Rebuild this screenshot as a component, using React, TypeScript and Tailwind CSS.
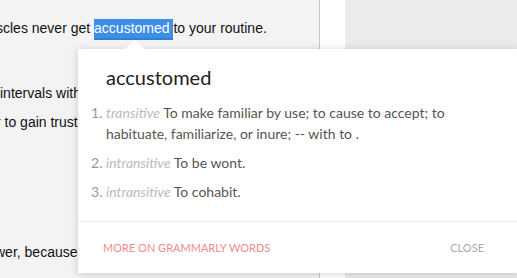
export default function App() {
  const defs = [
    {
      kind: 'transitive',
      text: 'To make familiar by use; to cause to accept; to habituate, familiarize, or inure; -- with to .',
    },
    { kind: 'intransitive', text: 'To be wont.' },
    { kind: 'intransitive', text: 'To cohabit.' },
  ]

  return (
    <div className="relative flex h-[278px] w-[517px] overflow-hidden bg-[#ebebeb]">
      {/* article column */}
      <div className="w-[320px] shrink-0 overflow-hidden border-r border-[#c9c9c9] bg-[#f3f3f3] font-['Liberation_Sans',Arial,sans-serif] text-[14px] leading-[29px] text-[#111]">
        <p className="-ml-[4px] mt-[14px] whitespace-nowrap">
          scles never get{' '}
          <span className="border-b-2 border-[#2f7fd8] bg-[#3d8fe6] pb-[2px] pt-[1px] text-white">
            accustomed{' '}
          </span>
          to your routine.
        </p>
        <p className="mt-[36px] whitespace-nowrap">intervals with your trainer</p>
        <p className="-ml-[4px] whitespace-nowrap">r to gain trust and build form</p>
        <p className="mt-[101px] -ml-[5px] whitespace-nowrap">wer, because the body adapts</p>
      </div>
      <div className="w-[25px] shrink-0 bg-white" />
      <div className="flex-1 bg-[#ebebeb]" />

      {/* definition popover */}
      <div className="absolute left-[78px] top-[49px] w-[440px] bg-white font-['Lato',sans-serif] shadow-[0_1px_8px_rgba(0,0,0,0.18)]">
        <div className="absolute -top-[9px] left-[47px] h-0 w-0 border-x-[10px] border-b-[9px] border-x-transparent border-b-white" />
        <div className="px-[28px] pb-[11px] pt-[14px]">
          <h2 className="text-[20px] leading-[28px] text-[#222]">accustomed</h2>
          <ol className="mt-[11px]">
            {defs.map((d, i) => (
              <li key={i} className="relative mb-[8px] text-[14px] leading-[21px] text-[#555]">
                <span className="absolute -left-[15px] text-[#999]">{i + 1}.</span>
                <span className="italic text-[#bbb]">{d.kind}</span> {d.text}
              </li>
            ))}
          </ol>
        </div>
        <div className="flex items-center justify-between border-t border-[#ececec] pb-[17px] pl-[25px] pr-[34px] pt-[18px] text-[11px] uppercase leading-[16px]">
          <span className="text-[#f08c8c]">More on Grammarly Words</span>
          <span className="text-[#aaa]">Close</span>
        </div>
      </div>
    </div>
  )
}
